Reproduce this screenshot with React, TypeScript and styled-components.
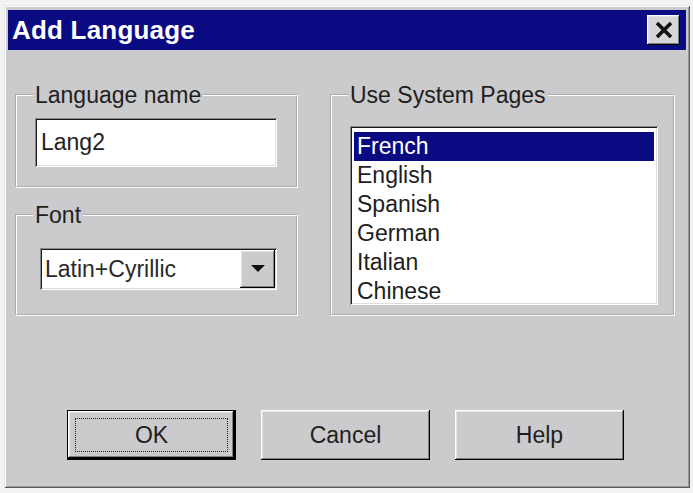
import React from "react";
import styled, { createGlobalStyle, css } from "styled-components";

const GlobalStyle = createGlobalStyle`
  html, body { margin: 0; padding: 0; background: #f3f3f3; }
  body { font-family: "Liberation Sans", Arial, sans-serif; }
  * { box-sizing: border-box; }
`;

const NAVY = "#0a0a82";
const FACE = "#cbcacd";
const INK = "#1e1e1e";

const raised = css`
  box-shadow: inset -1px -1px 0 #000, inset 1px 1px 0 #fff,
    inset -2px -2px 0 #808080, inset 2px 2px 0 #e4e4e4;
`;

const sunken = css`
  box-shadow: inset 1px 1px 0 #8a8a8a, inset -1px -1px 0 #fff,
    inset 2px 2px 0 #1a1a1a, inset -2px -2px 0 #dcdcdc;
`;

const Window = styled.div`
  margin: 5px 0 0 4px;
  width: 686px;
  height: 483px;
  padding: 5px 4px 4px 4px;
  background: ${FACE};
  box-shadow: inset 1px 1px 0 #e8e8e8, inset -1px -1px 0 #5a5a5a,
    inset 2px 2px 0 #ffffff, inset -2px -2px 0 #9a9a9a;
  display: flex;
  flex-direction: column;
`;

const TitleBar = styled.div`
  height: 40px;
  background: ${NAVY};
  display: flex;
  align-items: center;
  justify-content: space-between;
  padding: 0 6px 0 4px;
`;

const TitleText = styled.div`
  color: #fff;
  font-weight: bold;
  font-size: 26px;
  letter-spacing: 0.2px;
`;

const CloseButton = styled.div`
  width: 33px;
  height: 30px;
  background: #d6d5d8;
  ${raised};
  display: flex;
  align-items: center;
  justify-content: center;
`;

const Content = styled.div`
  display: flex;
  gap: 32px;
  padding: 32px 11px 0 7px;
`;

const Column = styled.div`
  width: 283px;
  display: flex;
  flex-direction: column;
  gap: 14px;
`;

const Group = styled.fieldset<{ $pad: string; $width: number }>`
  margin: 0;
  min-width: 0;
  width: ${(p) => p.$width}px;
  border: 2px groove #ffffff;
  padding: ${(p) => p.$pad};
`;

const Legend = styled.legend`
  font-size: 23px;
  line-height: 26px;
  color: ${INK};
  padding: 0 2px;
  margin-left: -2px;
`;

const TextField = styled.div`
  width: 242px;
  height: 49px;
  background: #fff;
  ${sunken};
  display: flex;
  align-items: center;
  padding: 0 6px;
  font-size: 23px;
  color: ${INK};
`;

const Combo = styled.div`
  width: 237px;
  height: 42px;
  margin-left: 5px;
  background: #fff;
  ${sunken};
  display: flex;
  align-items: stretch;
  padding: 2px;
`;

const ComboText = styled.div`
  flex: 1;
  display: flex;
  align-items: center;
  padding-left: 3px;
  font-size: 23px;
  color: #2a2a2a;
`;

const DropButton = styled.div`
  width: 35px;
  background: ${FACE};
  ${raised};
  display: flex;
  align-items: center;
  justify-content: center;
`;

const ListBox = styled.div`
  width: 308px;
  height: 179px;
  background: #fff;
  ${sunken};
  padding: 6px 4px 4px 4px;
  display: flex;
  flex-direction: column;
`;

const ListItem = styled.div<{ $selected?: boolean }>`
  height: 29px;
  line-height: 29px;
  padding-left: 3px;
  font-size: 23px;
  color: ${(p) => (p.$selected ? "#fff" : INK)};
  background: ${(p) => (p.$selected ? NAVY : "transparent")};
`;

const ButtonRow = styled.div`
  display: flex;
  gap: 25px;
  padding: 94px 0 0 59px;
`;

const Button = styled.div<{ $default?: boolean }>`
  width: 169px;
  height: 50px;
  background: ${FACE};
  display: flex;
  padding: ${(p) => (p.$default ? "7px" : "3px")};
  font-size: 23px;
  color: ${INK};
  ${(p) =>
    p.$default
      ? css`
          border: 1px solid #000;
          box-shadow: inset -2px -2px 0 #000, inset 1px 1px 0 #fff,
            inset -3px -3px 0 #808080, inset 2px 2px 0 #e4e4e4;
        `
      : raised};
`;

const ButtonLabel = styled.div<{ $focus?: boolean }>`
  flex: 1;
  display: flex;
  align-items: center;
  justify-content: center;
  border: 1px dotted ${(p) => (p.$focus ? "#222" : "transparent")};
`;

const languages = ["French", "English", "Spanish", "German", "Italian", "Chinese"];

export default function App() {
  return (
    <>
      <GlobalStyle />
      <Window>
        <TitleBar>
          <TitleText>Add Language</TitleText>
          <CloseButton>
            <svg width="18" height="16" viewBox="0 0 18 16">
              <path d="M2 1 L16 15 M16 1 L2 15" stroke="#111" strokeWidth="3.6" />
            </svg>
          </CloseButton>
        </TitleBar>
        <Content>
          <Column>
            <Group $width={283} $pad="10px 19px 19px 18px">
              <Legend>Language name</Legend>
              <TextField>Lang2</TextField>
            </Group>
            <Group $width={283} $pad="20px 19px 24px 18px">
              <Legend>Font</Legend>
              <Combo>
                <ComboText>Latin+Cyrillic</ComboText>
                <DropButton>
                  <svg width="14" height="8" viewBox="0 0 14 8">
                    <path d="M0 0 H14 L7 7 Z" fill="#111" />
                  </svg>
                </DropButton>
              </Combo>
            </Group>
          </Column>
          <Group $width={345} $pad="18px 17px 9px 18px">
            <Legend>Use System Pages</Legend>
            <ListBox>
              {languages.map((l, i) => (
                <ListItem key={l} $selected={i === 0}>
                  {l}
                </ListItem>
              ))}
            </ListBox>
          </Group>
        </Content>
        <ButtonRow>
          <Button $default>
            <ButtonLabel $focus>OK</ButtonLabel>
          </Button>
          <Button>
            <ButtonLabel>Cancel</ButtonLabel>
          </Button>
          <Button>
            <ButtonLabel>Help</ButtonLabel>
          </Button>
        </ButtonRow>
      </Window>
    </>
  );
}
